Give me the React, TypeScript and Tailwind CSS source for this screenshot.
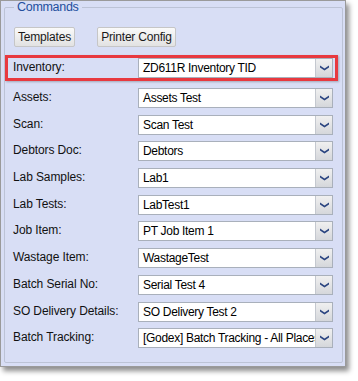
const rows = [
  ['Assets:', 'Assets Test'],
  ['Scan:', 'Scan Test'],
  ['Debtors Doc:', 'Debtors'],
  ['Lab Samples:', 'Lab1'],
  ['Lab Tests:', 'LabTest1'],
  ['Job Item:', 'PT Job Item 1'],
  ['Wastage Item:', 'WastageTest'],
  ['Batch Serial No:', 'Serial Test 4'],
  ['SO Delivery Details:', 'SO Delivery Test 2'],
  ['Batch Tracking:', '[Godex] Batch Tracking - All Places'],
];

function Combo({ value }: { value: string }) {
  return (
    <div className="w-[195px] h-[20px] flex bg-white border border-[#a9b0bb] shrink-0">
      <div className="flex-1 min-w-0 overflow-hidden whitespace-nowrap pl-[4px] text-[12px] tracking-[-0.3px] leading-[18px] text-black">
        {value}
      </div>
      <div className="w-[17px] h-full flex items-center justify-center border-l border-[#c4c8cf] bg-gradient-to-b from-[#f0f0f0] to-[#d5d7db]">
        <svg width="9" height="6" viewBox="0 0 9 6">
          <path d="M0 0.5 L4.5 3.5 L9 0.5 L9 2.5 L4.5 5.5 L0 2.5 Z" fill="#2b4580" />
        </svg>
      </div>
    </div>
  );
}

function Btn({ label, w }: { label: string; w: string }) {
  return (
    <div className={`${w} h-[20px] flex items-center justify-center rounded-[2px] border border-[#c6c6c6] bg-gradient-to-b from-[#fafafa] to-[#e2e2e2] text-[12px] tracking-[-0.2px] text-[#1a1a1a]`}>
      {label}
    </div>
  );
}

export default function App() {
  return (
    <div className="w-[358px] h-[381px] bg-white font-['Liberation_Sans',Arial,sans-serif]">
      <div className="w-[346px] h-[367px] bg-[#d8def5] border border-[#9a9a9a] pl-[3px] pr-[2px] shadow-[3px_4px_5px_rgba(0,0,0,0.45)]">
        <fieldset className="border border-[#bcc3d6] h-[363px] rounded-[2px] -mt-[1px]">
          <legend className="ml-[9px] px-[3px] text-[12.5px] tracking-[-0.3px] leading-[15px] text-[#234f9e]">Commands</legend>
          <div className="flex gap-[22px] pl-[9px] mt-[12px]">
            <Btn label="Templates" w="w-[61px]" />
            <Btn label="Printer Config" w="w-[79px]" />
          </div>
          <div className="mt-[8px] h-[26px] w-[333px] border-[3px] border-[#e8393f] flex items-center pl-[5px] shadow-[1px_1px_2px_rgba(0,0,0,0.25)]">
            <div className="w-[125px] text-[12px] tracking-[-0.1px] text-[#111] -mt-[2px]">Inventory:</div>
            <Combo value="ZD611R Inventory TID" />
          </div>
          <div className="mt-[7px] flex flex-col gap-[6.7px] pl-[8px]">
            {rows.map(([l, v]) => (
              <div key={l} className="flex items-center h-[20px]">
                <div className="w-[125px] text-[12px] tracking-[-0.1px] text-[#111] -mt-[2px]">{l}</div>
                <Combo value={v} />
              </div>
            ))}
          </div>
        </fieldset>
      </div>
    </div>
  );
}
